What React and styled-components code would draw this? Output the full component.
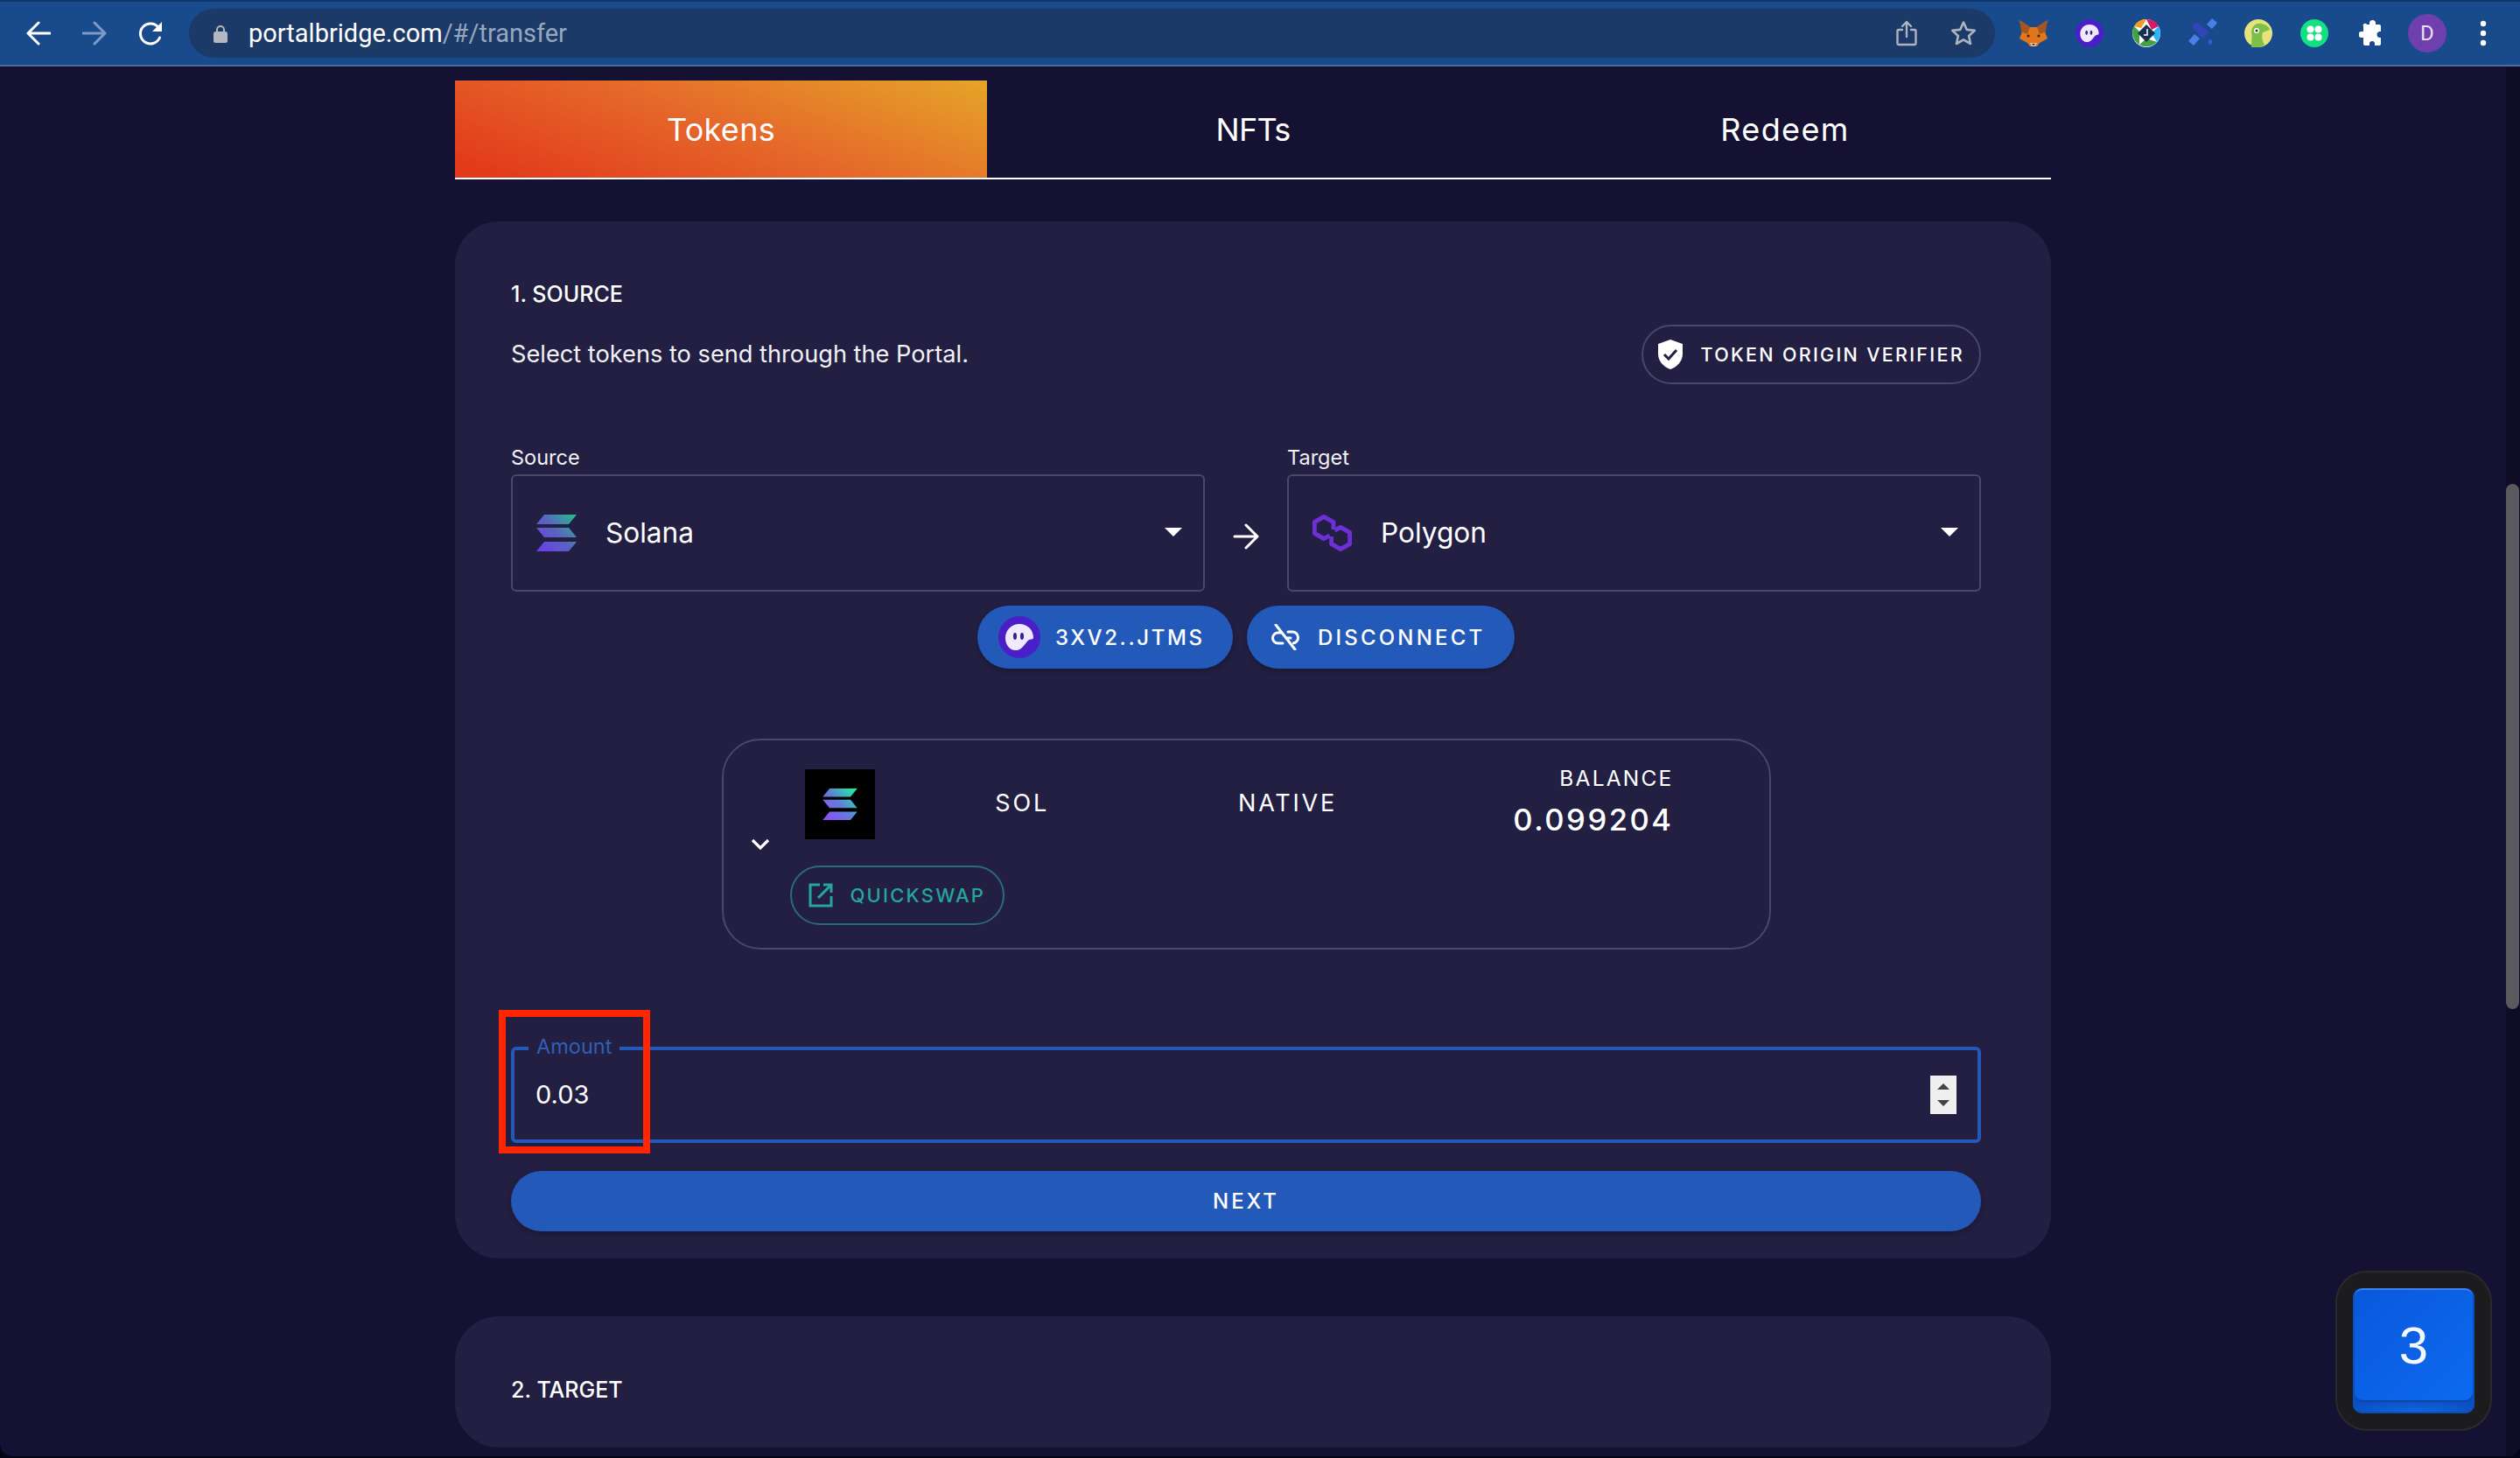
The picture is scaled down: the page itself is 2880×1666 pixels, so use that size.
import React from 'react';
import styled, { createGlobalStyle } from 'styled-components';

const Global = createGlobalStyle`
  html, body { margin: 0; padding: 0; background: #050416; }
  * { box-sizing: border-box; }
`;

const Window = styled.div`
  width: 2880px; height: 1664px; display: flex; flex-direction: column; overflow: hidden;
  position: relative; font-family: Inter, "Open Sans", sans-serif; color: #fff;
  background: #141133; border-radius: 0 0 14px 14px;
`;
const Toolbar = styled.header`
  height: 76px; flex: none; background: #184a8c; border-top: 2px solid #10356b; border-bottom: 2px solid #4a6da3;
  display: flex; align-items: center; padding: 0 0 0 30px;
`;
const NavIcons = styled.div`display: flex; align-items: center; gap: 36px; width: 186px; flex: none;`;
const UrlBar = styled.div`
  width: 2064px; height: 56px; border-radius: 28px; background: #1b3a68; flex: none;
  display: flex; align-items: center; padding: 0 21px 0 28px;
`;
const UrlText = styled.div`
  font-family: Roboto, sans-serif; font-size: 29px; margin-left: 24px; flex: 1; color: #fff;
  span { color: #98a7c0; }
`;
const UrlActions = styled.div`display: flex; align-items: center; gap: 38px;`;
const Extensions = styled.div`
  display: grid; grid-template-columns: repeat(9, 64.25px); align-items: center; justify-items: center; margin-left: 12px;
`;
const Avatar = styled.div`
  width: 44px; height: 44px; border-radius: 50%; background: #6f3fae; display: flex; align-items: center; justify-content: center;
  font-family: Roboto, sans-serif; font-size: 24px; color: #e9e0f5;
`;
const Viewport = styled.div`flex: 1; display: flex; min-height: 0;`;
const Main = styled.main`flex: 1; display: flex; flex-direction: column; align-items: center; padding-top: 16px; min-width: 0;`;
const Column = styled.div`width: 1824px; flex: none;`;
const ScrollTrack = styled.div`width: 16px; flex: none; background: #0f0c28;`;
const ScrollThumb = styled.div`height: 600px; margin-top: 477px; width: 15px; border-radius: 8px; background: #5a5a5e;`;
const Tabs = styled.nav`display: grid; grid-template-columns: repeat(3, 1fr); border-bottom: 2px solid #fff; height: 113px;`;
const Tab = styled.div`
  display: flex; align-items: center; justify-content: center; font-size: 36px; font-weight: 400; letter-spacing: ${p => p.$spacing}px;
  background: ${p => p.$active ? 'linear-gradient(20deg, #e23a1a 5%, #e5672a 50%, #e5a528 100%)' : 'transparent'};
`;
const Card = styled.section`
  background: #221f43; border-radius: 50px; padding: ${p => p.$collapsed ? '65px 80px 47px 64px' : '64px 80px 31px 64px'}; margin-top: ${p => p.$collapsed ? '66px' : '48px'};
`;
const StepTitle = styled.h2`margin: 0; font-size: 25px; font-weight: 500; line-height: 38px; color: #fff;`;
const DescRow = styled.div`display: flex; align-items: center; justify-content: space-between; margin-top: 16px; height: 68px;`;
const Desc = styled.p`margin: 0 0 2px; font-size: 27.2px; font-weight: 400; color: #f2f2f6;`;
const OutlinePill = styled.div`
  display: flex; align-items: center; height: 68px; border: 2px solid ${p => p.$teal ? '#2a6b78' : '#4a4768'}; border-radius: 34px;
  padding: ${p => p.$teal ? '0 20px 0 19px' : '0 17px 0 17px'}; gap: 20px;
  font-size: ${p => p.$teal ? '22px' : '21.5px'}; font-weight: 500; letter-spacing: ${p => p.$teal ? '2.2px' : '2.3px'};
  color: ${p => p.$teal ? '#26a69a' : '#fff'}; width: fit-content; white-space: nowrap;
`;
const SelectRow = styled.div`display: grid; grid-template-columns: 793px 1fr 793px; margin-top: 73px;`;
const Field = styled.div`display: flex; flex-direction: column;`;
const FieldLabel = styled.label`font-size: 23.5px; line-height: 22px; margin-bottom: 8px; color: #f2f2f6;`;
const Select = styled.div`
  height: 134px; border: 2px solid #4a4768; border-radius: 6px; display: flex; align-items: center; padding: 0 24px 0 27px;
  font-size: 31.6px; gap: 33px;
`;
const SelectName = styled.span`flex: 1; margin-top: -2px;`;
const Caret = styled.i`width: 0; height: 0; border-left: 10px solid transparent; border-right: 10px solid transparent; border-top: 10px solid #fff; margin-top: -2px;`;
const ArrowCell = styled.div`display: flex; align-items: center; justify-content: center; padding-top: 37px;`;
const WalletRow = styled.div`display: flex; justify-content: center; gap: 16px; margin-top: 16px;`;
const BlueButton = styled.div`
  height: 72px; width: ${p => p.$width}px; border-radius: 36px; background: #2359b8; display: flex; align-items: center; gap: ${p => p.$gap}px;
  padding-left: ${p => p.$left}px; font-size: 24px; font-weight: 500; letter-spacing: ${p => p.$spacing}px; box-shadow: 0 3px 6px rgba(0,0,0,.25); white-space: nowrap;
`;
const TokenBox = styled.div`
  width: 1199px; height: 241px; margin: 80px auto 0; border: 2px solid #4a4768; border-radius: 44px;
  display: flex; align-items: center; padding-left: 31px;
`;
const Chevron = styled.div`width: 24px; flex: none; margin-right: 21px; display: flex;`;
const TokenBody = styled.div`width: 1024px; display: flex; flex-direction: column; gap: 30px; margin-top: 6px;`;
const TokenRow = styled.div`display: grid; grid-template-columns: 114px repeat(3, 1fr); align-items: center; height: 80px;`;
const TokenImage = styled.div`width: 80px; height: 80px; background: #000; margin-left: 17px; display: flex; align-items: center; justify-content: center;`;
const TokenCell = styled.div`text-align: center; font-size: 27px; letter-spacing: 2.8px; font-weight: 400; margin-top: -2px;`;
const BalanceCell = styled.div`text-align: right; padding-right: 14px; margin-top: -4px; display: flex; flex-direction: column; align-items: flex-end;`;
const BalanceLabel = styled.div`font-size: 24.5px; line-height: 28px; letter-spacing: 2.2px;`;
const BalanceValue = styled.div`font-size: 34.6px; font-weight: 500; line-height: 44px; letter-spacing: 2.5px; margin-top: 11px;`;
const AmountField = styled.div`
  margin-top: 111px; height: 110px; border: 4px solid #2359b8; border-radius: 6px; display: flex; align-items: center;
  justify-content: space-between; padding: 0 24px 0 24px; position: relative; font-size: 29px;
`;
const AmountValue = styled.span`margin-top: -2px;`;
const AmountLegend = styled.span`
  position: absolute; left: 16px; top: -18px; padding: 0 9px; background: #221f43; color: #2f5fb5; font-size: 23.5px; line-height: 28px;
`;
const Spinner = styled.div`
  width: 30px; height: 44px; background: #efefef; display: flex; flex-direction: column; align-items: center; justify-content: center; gap: 12px;
`;
const SpinnerArrow = styled.i`
  width: 0; height: 0; border-left: 7px solid transparent; border-right: 7px solid transparent;
  ${p => p.$down ? 'border-top: 7px solid #444;' : 'border-bottom: 7px solid #444;'}
`;
const NextButton = styled.div`
  margin-top: 32px; height: 69px; border-radius: 35px; background: #2359b8; display: flex; align-items: center; justify-content: center;
  font-size: 24px; font-weight: 500; letter-spacing: 2.9px; box-shadow: 0 3px 6px rgba(0,0,0,.25);
`;
const Highlight = styled.div`position: absolute; left: 570px; top: 1154px; width: 173px; height: 164px; border: 8px solid #ff2600; pointer-events: none;`;
const KeyWidget = styled.div`
  position: absolute; left: 2669px; top: 1452px; width: 179px; height: 183px; border-radius: 36px; background: #1c1c1e; border: 2px solid #2a2a2c;
  padding: 18px 18px 18px;
`;
const KeyBase = styled.div`
  height: 143px; border-radius: 10px; padding: 0 2px; border-bottom: 2px solid #0d4fb8;
  background: radial-gradient(ellipse 60% 14px at 50% 100%, #0f66e2, #0a4fc0);
`;
const KeyCap = styled.div`
  height: 128px; border-radius: 9px; border-top: 2px solid #3d83ef; background: linear-gradient(135deg, #0a58dc, #0c6af0);
  box-shadow: 0 2px 0 #0a45a8;
  display: flex; align-items: center; justify-content: center; font-family: "Liberation Sans", sans-serif; font-size: 60px; color: #f4f7fd;
`;

const Back = ({ color = '#fff' }) => (
  <svg width="28" height="28" viewBox="0 0 28 28" fill="none" stroke={color} strokeWidth="3" strokeLinecap="round" strokeLinejoin="round"><path d="M27 14H2M14 2 2 14l12 12" /></svg>
);
const Forward = () => (
  <svg width="28" height="28" viewBox="0 0 28 28" fill="none" stroke="#7f9ac4" strokeWidth="3" strokeLinecap="round" strokeLinejoin="round"><path d="M1 14h25M14 2l12 12-12 12" /></svg>
);
const Reload = () => (
  <svg width="28" height="30" viewBox="0 0 28 30" fill="none"><path d="M24.5 20a11.5 11.5 0 1 1-1-11" stroke="#fff" strokeWidth="3" strokeLinecap="round" /><path d="M27 2v11H16z" fill="#fff" /></svg>
);
const Lock = () => (
  <svg width="16" height="21" viewBox="0 0 16 21"><path d="M4 9V6a4 4 0 0 1 8 0v3" fill="none" stroke="#b4b8c2" strokeWidth="2" /><rect y="8" width="16" height="13" rx="2.5" fill="#b4b8c2" /></svg>
);
const Share = () => (
  <svg width="24" height="30" viewBox="0 0 24 30" fill="none" stroke="#aeb4bf" strokeWidth="2.4" strokeLinecap="round" strokeLinejoin="round"><path d="M7 11H3a1.500 1.500 0 0 0-1.500 1.500v14A1.500 1.500 0 0 0 3 28h18a1.500 1.500 0 0 0 1.500-1.500v-14A1.500 1.500 0 0 0 21 11h-4M12 19V2M7 7l5-5 5 5" /></svg>
);
const Star = () => (
  <svg width="30" height="30" viewBox="0 0 30 30" fill="none" stroke="#aeb4bf" strokeWidth="2.6" strokeLinejoin="round"><path d="m15 2.500 3.800 8.400 9 1-6.700 6.100 1.900 9-8-4.600-8 4.600 1.900-9L2.200 11.900l9-1z" /></svg>
);
const Fox = () => (
  <svg width="34" height="32" viewBox="0 0 34 32"><path d="M1 1l12 8h8l12-8-3 13 3 8-9 5-3 4h-8l-3-4-9-5 3-8z" fill="#e2761b" /><path d="M1 1l12 8-3 8-7-3z M33 1 21 9l3 8 7-3z" fill="#a5561f" /><path d="M13 27h8l-2 4h-4z" fill="#d8c6b6" /><path d="M15 28h4l-2 2z" fill="#222" /><circle cx="11" cy="19" r="1.500" fill="#3a2410" /><circle cx="23" cy="19" r="1.500" fill="#3a2410" /></svg>
);
const Ghost = ({ size = 32 }) => (
  <svg width={size} height={size} viewBox="0 0 48 48"><circle cx="24" cy="24" r="24" fill="#4b1fc8" /><path d="M8 25c0-9 7-16 16-16 9.500 0 16 7 16 15.500 0 1-1 2-2.500 2-4 0-6 5-10 9-3 3-6 4-9 3.500C12 38 8 32 8 25z" fill="#efe9fb" /><ellipse cx="19" cy="23" rx="2" ry="4" fill="#3a1d8a" /><ellipse cx="27" cy="23" rx="2" ry="4" fill="#3a1d8a" /></svg>
);
const ClockExt = () => (
  <svg width="32" height="32" viewBox="0 0 32 32"><circle cx="16" cy="16" r="16" fill="#fff" /><path d="M16 0a16 16 0 0 1 14 8L22 12z" fill="#d81b60" /><path d="M30 8a16 16 0 0 1-2 18l-6-10z" fill="#29b6f6" /><path d="M28 26a16 16 0 0 1-20 3l8-7z" fill="#43a047" /><path d="M8 29A16 16 0 0 1 2 8l6 6z" fill="#43a047" /><path d="M2 8a16 16 0 0 1 14-8l-6 10z" fill="#f59a1b" /><path d="M16 6l10 10-10 10L6 16z" fill="#17304f" /><path d="M17 11v7h-4" stroke="#fff" strokeWidth="1.500" fill="none" /></svg>
);
const Satellite = () => (
  <svg width="36" height="36" viewBox="0 0 36 36"><path d="M23 8l6-7 6 5-6 7zM2 27l7-8 6 5-7 8z" fill="#4a7fe8" /><path d="M8 7a6 6 0 0 1 8 2l10 8-8 7-9-10a6 6 0 0 1-1-7z" fill="#2f45b8" /><ellipse cx="27" cy="28" rx="2" ry="3" fill="#2f5fd0" /></svg>
);
const Gecko = () => (
  <svg width="32" height="32" viewBox="0 0 32 32"><circle cx="16" cy="16" r="16" fill="#e5e37a" /><path d="M8 32c0-6 1-12 0-18 1-7 6-10 12-9 4 1 8 3 9 7l-8 3c-2 5 0 11 2 14-4 4-11 5-15 3z" fill="#7cc04a" /><circle cx="14" cy="13" r="3" fill="#fff" /><circle cx="14" cy="13" r="1.500" fill="#333" /></svg>
);
const GreenExt = () => (
  <svg width="32" height="32" viewBox="0 0 32 32"><circle cx="16" cy="16" r="16" fill="#12e083" /><g fill="#fff"><circle cx="11.500" cy="11.500" r="4" /><circle cx="20.500" cy="11.500" r="4" /><circle cx="11.500" cy="20.500" r="4" /><circle cx="20.500" cy="20.500" r="4" /></g></svg>
);
const Puzzle = () => (
  <svg width="28" height="30" viewBox="0 0 28 30"><path d="M9 5h3V3.500a3.500 3.500 0 0 1 7 0V5h4a2 2 0 0 1 2 2v6h-1a3.500 3.500 0 0 0 0 7h1v7a2 2 0 0 1-2 2h-5v-2a3 3 0 0 0-6 0v2H7a2 2 0 0 1-2-2v-7H3a3.500 3.500 0 0 1 0-7h2V7a2 2 0 0 1 4-2z" fill="#fff" /></svg>
);
const Dots = () => (
  <svg width="8" height="30" viewBox="0 0 8 30" fill="#fff"><circle cx="4" cy="4" r="3.200" /><circle cx="4" cy="15" r="3.200" /><circle cx="4" cy="26" r="3.200" /></svg>
);
const Shield = () => (
  <svg width="28" height="34" viewBox="0 0 28 34"><path d="M14 0 28 5v11c0 9-6 15-14 18C6 31 0 25 0 16V5z" fill="#fff" /><path d="m7 17 5 5 9-10" fill="none" stroke="#221f43" strokeWidth="3" /></svg>
);
const SolanaMark = ({ id, width, height, from, mid, to }) => (
  <svg width={width} height={height} viewBox="0 0 46 42">
    <defs>
      <linearGradient id={id} x1="46" y1="0" x2="0" y2="42" gradientUnits="userSpaceOnUse"><stop offset="0" stopColor={from} /><stop offset=".5" stopColor={mid} /><stop offset="1" stopColor={to} /></linearGradient>
    </defs>
    <g fill={`url(#${id})`}>
      <path d="M9 0h37l-9 11H0z" />
      <path d="M0 15h37l9 11H9z" />
      <path d="M9 31h37l-9 11H0z" />
    </g>
  </svg>
);
const PolygonMark = () => (
  <svg width="45" height="42" viewBox="0 0 47 42" preserveAspectRatio="none" fill="none" stroke="#6f2fd6" strokeWidth="5" strokeLinejoin="round">
    <path d="M25 17V8.500L13.500 2.500 2.500 8.500v13l11 6 7-3.500" />
    <path d="M22.500 25v8.500l11 6 11-6v-13l-11-6-7 3.500" />
  </svg>
);
const RightArrow = () => (
  <svg width="30" height="30" viewBox="0 0 30 30" fill="none" stroke="#fff" strokeWidth="3" strokeLinecap="round" strokeLinejoin="round"><path d="M2 15h26M15 2l13 13-13 13" /></svg>
);
const LinkOff = () => (
  <svg width="34" height="30" viewBox="0 0 34 30" fill="none" stroke="#fff" strokeWidth="3" strokeLinecap="round"><path d="M12 10H8.500a6 6 0 0 0-6 6 6 6 0 0 0 6 6H14M20 9h5a6.500 6.500 0 0 1 6.500 6.500c0 3-2 5.500-5 6.300M18 16h5M6 1l22 28" /></svg>
);
const ChevronDown = () => (
  <svg width="22" height="14" viewBox="0 0 22 14" fill="none" stroke="#fff" strokeWidth="3.200"><path d="m2 2 9 9 9-9" /></svg>
);
const External = () => (
  <svg width="28" height="28" viewBox="0 0 28 28" fill="none" stroke="#26a69a" strokeWidth="3"><path d="M13 2H2v24h24V15M17 2h9v9M26 2 11 17" /></svg>
);

export default function App() {
  return (
    <Window>
      <Global />
      <Toolbar>
        <NavIcons><Back /><Forward /><Reload /></NavIcons>
        <UrlBar>
          <Lock />
          <UrlText>portalbridge.com<span>/#/transfer</span></UrlText>
          <UrlActions><Share /><Star /></UrlActions>
        </UrlBar>
        <Extensions>
          <Fox /><Ghost /><ClockExt /><Satellite /><Gecko /><GreenExt /><Puzzle /><Avatar>D</Avatar><Dots />
        </Extensions>
      </Toolbar>
      <Viewport>
        <Main>
          <Column>
            <Tabs>
              <Tab $active $spacing={0.3}>Tokens</Tab>
              <Tab $spacing={-0.8}>NFTs</Tab>
              <Tab $spacing={1.4}>Redeem</Tab>
            </Tabs>
            <Card>
              <StepTitle>1. SOURCE</StepTitle>
              <DescRow>
                <Desc>Select tokens to send through the Portal.</Desc>
                <OutlinePill><Shield />TOKEN ORIGIN VERIFIER</OutlinePill>
              </DescRow>
              <SelectRow>
                <Field>
                  <FieldLabel>Source</FieldLabel>
                  <Select>
                    <SolanaMark id="solA" width={46} height={42} from="#25c08a" mid="#5a62c0" to="#6d3be8" />
                    <SelectName>Solana</SelectName>
                    <Caret />
                  </Select>
                </Field>
                <ArrowCell><RightArrow /></ArrowCell>
                <Field>
                  <FieldLabel>Target</FieldLabel>
                  <Select>
                    <PolygonMark />
                    <SelectName>Polygon</SelectName>
                    <Caret />
                  </Select>
                </Field>
              </SelectRow>
              <WalletRow>
                <BlueButton $width={292} $left={24} $gap={17} $spacing={2.6}><Ghost size={48} />3XV2..JTMS</BlueButton>
                <BlueButton $width={306} $left={27} $gap={20} $spacing={3.2}><LinkOff />DISCONNECT</BlueButton>
              </WalletRow>
              <TokenBox>
                <Chevron><ChevronDown /></Chevron>
                <TokenBody>
                  <TokenRow>
                    <TokenImage><SolanaMark id="solB" width={40} height={36} from="#19fb9b" mid="#5f7fd8" to="#9945ff" /></TokenImage>
                    <TokenCell>SOL</TokenCell>
                    <TokenCell>NATIVE</TokenCell>
                    <BalanceCell>
                      <BalanceLabel>BALANCE</BalanceLabel>
                      <BalanceValue>0.099204</BalanceValue>
                    </BalanceCell>
                  </TokenRow>
                  <OutlinePill $teal><External />QUICKSWAP</OutlinePill>
                </TokenBody>
              </TokenBox>
              <AmountField>
                <AmountLegend>Amount</AmountLegend>
                <AmountValue>0.03</AmountValue>
                <Spinner><SpinnerArrow /><SpinnerArrow $down /></Spinner>
              </AmountField>
              <NextButton>NEXT</NextButton>
            </Card>
            <Card $collapsed>
              <StepTitle>2. TARGET</StepTitle>
            </Card>
          </Column>
        </Main>
        <ScrollTrack><ScrollThumb /></ScrollTrack>
      </Viewport>
      <Highlight />
      <KeyWidget>
        <KeyBase><KeyCap>3</KeyCap></KeyBase>
      </KeyWidget>
    </Window>
  );
}
